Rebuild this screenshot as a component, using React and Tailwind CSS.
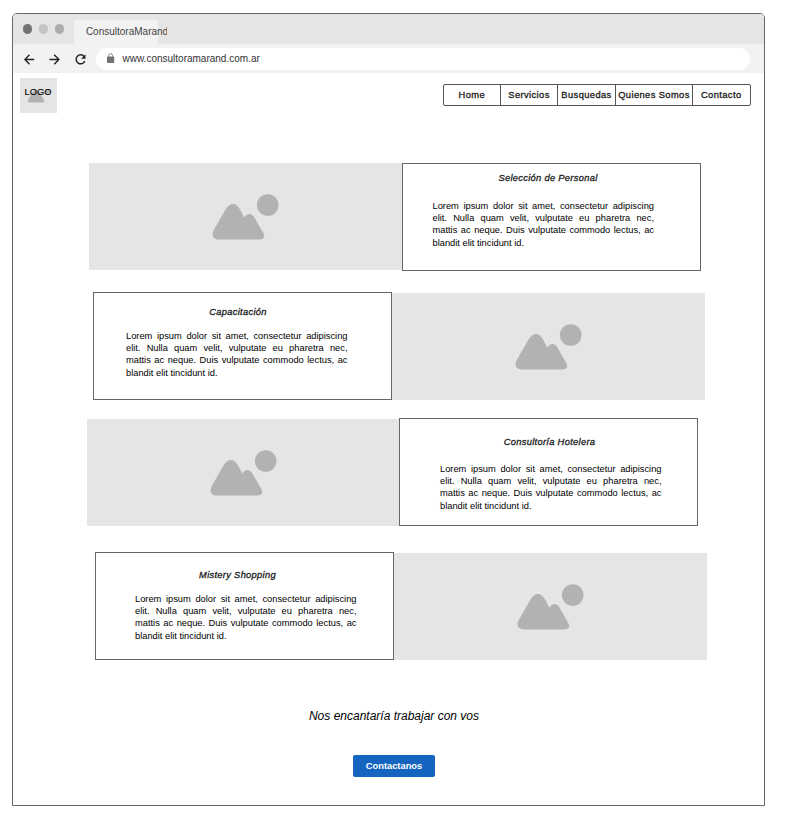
const LOREM =
  'Lorem ipsum dolor sit amet, consectetur adipiscing elit. Nulla quam velit, vulputate eu pharetra nec, mattis ac neque. Duis vulputate commodo lectus, ac blandit elit tincidunt id.';

function Picture({ className = '' }) {
  return (
    <div className={`h-[107px] shrink-0 bg-[#e5e5e5] ${className}`}>
      <svg className="block" width="312" height="107" viewBox="0 0 312 107" fill="#b2b2b2">
        <circle cx="178.700" cy="42" r="10.800" />
        <path d="M130 76.500C124.500 76.500 122 72.500 124.500 67.500L136.500 46.500C140.500 39 147.500 39 151 46.500L155.400 54.700C158 50 162.500 49.800 165.200 54.200L174 69.500C176.500 73.500 175 76.500 170 76.500Z" />
      </svg>
    </div>
  );
}

function Card({ title, titleClass, textClass }) {
  return (
    <div className="h-[108px] w-[299px] shrink-0 border border-[#666] bg-white">
      <h2 className={`text-center text-[9.33px] leading-3 tracking-[0.3px] text-[#1a1a1a] italic [-webkit-text-stroke:0.3px_#1a1a1a] ${titleClass}`}>{title}</h2>
      <p className={`w-[221.5px] text-justify text-[9.3px] leading-[12.2px] text-black ${textClass}`}>{LOREM}</p>
    </div>
  );
}

export default function App() {
  return (
    <div className="h-[819px] w-[807px] overflow-hidden bg-white pt-[13px] pl-3 font-['Liberation_Sans',Arial,sans-serif]">
      <div className="flex h-[793px] w-[753px] flex-col overflow-hidden rounded-t-[5px] border border-[#666] bg-white">
        <div className="flex h-[30px] shrink-0 bg-[#e5e5e5] pl-2.5">
          <div className="flex items-center gap-[6.5px]">
            <span className="size-[9.3px] rounded-full bg-[#737373]" />
            <span className="size-[9.3px] rounded-full bg-[#c4c4c4]" />
            <span className="size-[9.3px] rounded-full bg-[#adadad]" />
          </div>
          <div className="mt-[6px] ml-[10px] h-6 w-[84px] rounded-t-[4px] bg-[#f2f2f2] pt-[5px] pl-3">
            <div className="w-[81px] overflow-hidden text-[10px] leading-[13px] whitespace-nowrap text-[#444]">ConsultoraMarand</div>
          </div>
        </div>
        <div className="flex h-[29px] shrink-0 items-center bg-[#f2f2f2] pl-[10.5px]">
          <svg width="64" height="12" viewBox="0 0 64 12" fill="none" stroke="#222" strokeWidth="1.4">
            <path d="M10.200 6.500H1M5.500 1.800L.9 6.500l4.600 4.700M25.500 6.500h9.300M30.200 1.800L34.900 6.500l-4.700 4.700" />
            <path d="M60.300 3.700A4.500 4.500 0 1 0 60.800 8" />
            <path d="M61.500 1.300v4.400h-4.400z" fill="#222" stroke="none" />
          </svg>
          <div className="ml-[8px] flex h-[22px] w-[654px] items-center rounded-full bg-white pl-[10px]">
            <svg width="9" height="11" viewBox="0 0 9 11">
              <rect x="1" y="3.500" width="7.200" height="6.500" rx=".7" fill="#737373" />
              <path d="M2.700 4V2.500a1.900 1.900 0 0 1 3.800 0V4" fill="none" stroke="#888" />
            </svg>
            <span className="ml-2 pt-px text-[10px] leading-3 text-[#333]">www.consultoramarand.com.ar</span>
          </div>
        </div>
        <header className="flex h-[90px] shrink-0 items-start pt-[5px] pl-[6.5px]">
          <div className="relative h-[35px] w-[37px] bg-[#e5e5e5]">
            <svg className="block" width="37" height="35" viewBox="0 0 37 35" fill="#b2b2b2">
              <path d="M9.500 24.500Q7 24.500 8 22L12 15Q13.500 12.500 16 12.500Q18.500 12.500 20 15L24 22Q25 24.500 22.500 24.500Z" />
              <circle cx="27.500" cy="13.500" r="2.400" />
            </svg>
            <span className="absolute top-[8px] left-[5px] text-[9.33px] leading-3 text-black [-webkit-text-stroke:0.15px_#000]">LOGO</span>
          </div>
          <nav className="mt-[6px] ml-[386px] flex h-[22px] w-[308px] divide-x divide-[#555] rounded-[2px] border border-[#555] text-center text-[9.33px] leading-[21px] tracking-[0.4px] whitespace-nowrap text-[#1a1a1a] [-webkit-text-stroke:0.3px_#1a1a1a]">
            <a className="w-[57.5px]">Home</a>
            <a className="w-[57px]">Servicios</a>
            <a className="w-[58px]">Busquedas</a>
            <a className="w-[77px]">Quienes Somos</a>
            <a className="flex-1">Contacto</a>
          </nav>
        </header>
        <main className="flex flex-col items-start">
          <section className="ml-[76px] flex">
            <Picture className="w-[312.5px]" />
            <Card title="Selección de Personal" titleClass="mt-[8px] mr-[6px]" textClass="mt-[16px] ml-[30px]" />
          </section>
          <section className="mt-[21px] ml-[80px] flex">
            <Card title="Capacitación" titleClass="mt-[13px] mr-[9px]" textClass="mt-[12px] ml-[32px]" />
            <Picture className="mt-px w-[313px]" />
          </section>
          <section className="mt-[18px] ml-[73.5px] flex">
            <Picture className="mt-px w-[312.5px]" />
            <Card title="Consultoría Hotelera" titleClass="mt-[17px] ml-[2px]" textClass="mt-[15px] ml-[40px]" />
          </section>
          <section className="mt-[26px] ml-[82px] flex">
            <Card title="Mistery Shopping" titleClass="mt-[16px] mr-[14px]" textClass="mt-[12px] ml-[39px]" />
            <Picture className="mt-px w-[313px]" />
          </section>
          <div className="mt-[48px] ml-[296px] flex w-[170px] flex-col items-center">
            <p className="text-[12px] leading-4 whitespace-nowrap text-black italic">Nos encantaría trabajar con vos</p>
            <button className="mt-[30.5px] h-[22px] w-[82px] rounded-[2px] bg-[#1565c0] text-[9.33px] leading-5 font-bold text-white">Contactanos</button>
          </div>
        </main>
      </div>
    </div>
  );
}
